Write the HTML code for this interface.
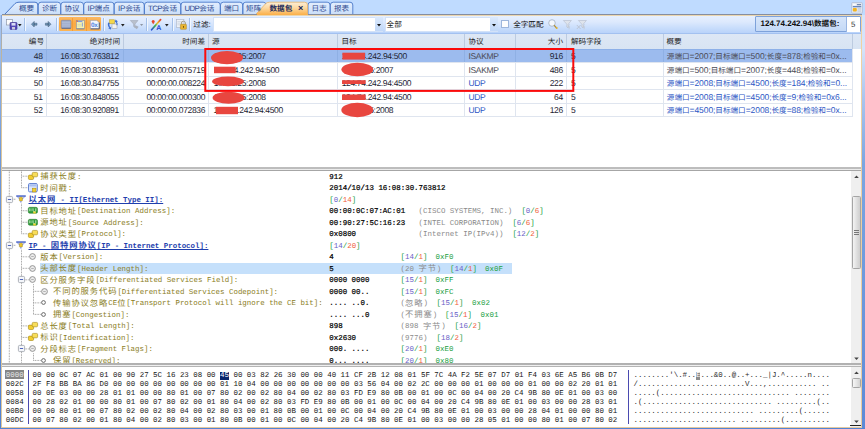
<!DOCTYPE html><html><head><meta charset="utf-8"><title>数据包</title><style>
html,body{margin:0;padding:0;background:#bfdbff;}
#root{text-rendering:geometricPrecision;position:relative;width:865px;height:429px;overflow:hidden;background:#bfdbff;font-family:"Liberation Sans","Noto Sans CJK SC",sans-serif;}
#root div{position:absolute;box-sizing:border-box;}
#root svg{position:absolute;overflow:visible;}
.t{white-space:pre;color:#1a1a1a;}
.s{font-family:"Liberation Sans","Noto Sans CJK SC",sans-serif;font-size:8.1px;}
.tb{font-size:8.5px;letter-spacing:-0.34px;}
.tb .c{letter-spacing:0;}
.tabt .c{letter-spacing:0;}
.s .c{font-size:7.6px;line-height:0;}
.m{font-family:"Liberation Mono","Noto Sans CJK SC",monospace;font-size:7.45px;}
.m .c{line-height:0;font-size:8.3px;letter-spacing:0.9px;font-family:"Noto Sans CJK SC",sans-serif;position:relative;top:0.3px;}
.lab{color:#8a7d1c;}
.val{color:#000;-webkit-text-stroke:0.2px #000;}
.gry{color:#8a8a8a;}
.g{color:#22a03f;}
.p{color:#6a5fc7;}
.r{color:#f0603a;}
.hd{color:#1c1c1c;}
.b{font-weight:bold;}
.sec{color:#1f3fae;font-weight:bold;text-decoration:underline;text-decoration-skip-ink:none;text-underline-offset:1px;text-decoration-thickness:0.8px;}
</style></head><body><div id="root">
<div style="left:0px;top:0px;width:865px;height:14.5px;background:#bfdbff;"></div>
<svg width="865" height="16" viewBox="0 0 865 16" style="left:0;top:0"><defs><linearGradient id="tg" x1="0" y1="0" x2="0" y2="1"><stop offset="0" stop-color="#e3eefd"/><stop offset="1" stop-color="#cadef9"/></linearGradient><linearGradient id="ta" x1="0" y1="0" x2="0" y2="1"><stop offset="0" stop-color="#fdeed6"/><stop offset="0.45" stop-color="#fcd9a2"/><stop offset="1" stop-color="#fbb04a"/></linearGradient></defs><path d="M4.5 14.5 L15 3.5 Q16.5 2.2 19 2.2 L35 2.2 Q37.8 2.2 37.8 5 L37.8 14.5 Z" fill="url(#tg)" stroke="#4a78c8" stroke-width="1"/><path d="M38.3 14.5 L38.3 5 Q38.3 2.2 41.1 2.2 L57.8 2.2 Q60.6 2.2 60.6 5 L60.6 14.5 Z" fill="url(#tg)" stroke="#4a78c8" stroke-width="0.9"/><path d="M60.9 14.5 L60.9 5 Q60.9 2.2 63.7 2.2 L80.7 2.2 Q83.5 2.2 83.5 5 L83.5 14.5 Z" fill="url(#tg)" stroke="#4a78c8" stroke-width="0.9"/><path d="M83.8 14.5 L83.8 5 Q83.8 2.2 86.6 2.2 L111.2 2.2 Q114 2.2 114 5 L114 14.5 Z" fill="url(#tg)" stroke="#4a78c8" stroke-width="0.9"/><path d="M114.3 14.5 L114.3 5 Q114.3 2.2 117.1 2.2 L141.4 2.2 Q144.2 2.2 144.2 5 L144.2 14.5 Z" fill="url(#tg)" stroke="#4a78c8" stroke-width="0.9"/><path d="M144.5 14.5 L144.5 5 Q144.5 2.2 147.3 2.2 L177.9 2.2 Q180.7 2.2 180.7 5 L180.7 14.5 Z" fill="url(#tg)" stroke="#4a78c8" stroke-width="0.9"/><path d="M181 14.5 L181 5 Q181 2.2 183.8 2.2 L217.4 2.2 Q220.2 2.2 220.2 5 L220.2 14.5 Z" fill="url(#tg)" stroke="#4a78c8" stroke-width="0.9"/><path d="M220.5 14.5 L220.5 5 Q220.5 2.2 223.3 2.2 L239.9 2.2 Q242.7 2.2 242.7 5 L242.7 14.5 Z" fill="url(#tg)" stroke="#4a78c8" stroke-width="0.9"/><path d="M243 14.5 L243 5 Q243 2.2 245.8 2.2 L263.2 2.2 Q266 2.2 266 5 L266 14.5 Z" fill="url(#tg)" stroke="#4a78c8" stroke-width="0.9"/><path d="M308 14.5 L308 5 Q308 2.2 310.8 2.2 L327.2 2.2 Q330 2.2 330 5 L330 14.5 Z" fill="url(#tg)" stroke="#4a78c8" stroke-width="0.9"/><path d="M330.4 14.5 L330.4 5 Q330.4 2.2 333.2 2.2 L350 2.2 Q352.8 2.2 352.8 5 L352.8 14.5 Z" fill="url(#tg)" stroke="#4a78c8" stroke-width="0.9"/><path d="M255.5 14.8 L265.5 3.8 Q267 2.2 269.5 2.2 L304.5 2.2 Q307.5 2.2 307.5 5 L307.5 14.8 Z" fill="url(#ta)" stroke="#e8b266" stroke-width="0.8"/></svg>
<div class="t s tabt" style="left:19px;top:2.5px;height:12px;line-height:12px;color:#2f4a8f;font-size:7.8px;letter-spacing:-0.6px;"><span class="c">概要</span></div>
<div class="t s tabt" style="left:42px;top:2.5px;height:12px;line-height:12px;color:#2f4a8f;font-size:7.8px;letter-spacing:-0.6px;"><span class="c">诊断</span></div>
<div class="t s tabt" style="left:64.5px;top:2.5px;height:12px;line-height:12px;color:#2f4a8f;font-size:7.8px;letter-spacing:-0.6px;"><span class="c">协议</span></div>
<div class="t s tabt" style="left:87.4px;top:2.5px;height:12px;line-height:12px;color:#2f4a8f;font-size:8px;letter-spacing:-0.2px;">IP<span class="c">端点</span></div>
<div class="t s tabt" style="left:118px;top:2.5px;height:12px;line-height:12px;color:#2f4a8f;font-size:8px;letter-spacing:-0.2px;">IP<span class="c">会话</span></div>
<div class="t s tabt" style="left:148px;top:2.5px;height:12px;line-height:12px;color:#2f4a8f;font-size:7.8px;letter-spacing:-0.6px;">TCP<span class="c">会话</span></div>
<div class="t s tabt" style="left:184.5px;top:2.5px;height:12px;line-height:12px;color:#2f4a8f;font-size:7.8px;letter-spacing:-0.6px;">UDP<span class="c">会话</span></div>
<div class="t s tabt" style="left:224px;top:2.5px;height:12px;line-height:12px;color:#2f4a8f;font-size:7.8px;letter-spacing:-0.6px;"><span class="c">端口</span></div>
<div class="t s tabt" style="left:246px;top:2.5px;height:12px;line-height:12px;color:#2f4a8f;font-size:7.8px;letter-spacing:-0.6px;"><span class="c">矩阵</span></div>
<div class="t s tabt" style="left:311.5px;top:2.5px;height:12px;line-height:12px;color:#2f4a8f;font-size:7.8px;letter-spacing:-0.6px;"><span class="c">日志</span></div>
<div class="t s tabt" style="left:334px;top:2.5px;height:12px;line-height:12px;color:#2f4a8f;font-size:7.8px;letter-spacing:-0.6px;"><span class="c">报表</span></div>
<div class="t s b tabt" style="left:269.5px;top:2.6px;height:12px;line-height:12px;color:#1c2c5c;font-size:7.9px;"><span class="c">数据包</span></div>
<div class="t s b" style="left:298px;top:2.4px;height:12px;line-height:12px;color:#1c2c5c;font-size:9px;">×</div>
<svg width="12" height="12" viewBox="0 0 12 12" style="left:850.5px;top:1.6px"><rect x="0.5" y="0.5" width="11" height="10.8" rx="1.2" fill="#dfe5ef" stroke="#aebcd6" stroke-width="0.7"/><rect x="2" y="1.8" width="2.8" height="1.6" fill="#fbfcfe"/><rect x="6" y="2" width="4" height="1.2" fill="#7389b2"/><rect x="1.8" y="4.2" width="8.4" height="1" fill="#4a6fae"/><rect x="1.8" y="6" width="4" height="3.6" rx="1" fill="#f3b41f"/><path d="M6.8 6.4H10M6.8 7.8H10M6.8 9.2H10" stroke="#b8c1d0" stroke-width="0.6"/></svg>
<div style="left:1.5px;top:13.9px;width:860.5px;height:1px;background:#868e9f;"></div>
<div style="left:256.5px;top:13.9px;width:51px;height:1px;background:#fbb24e;"></div>
<div style="left:1.5px;top:14.9px;width:860.5px;height:0.9px;background:#ecd6ae;"></div>
<div style="left:1.5px;top:15.8px;width:860.5px;height:17.5px;background:linear-gradient(#e6f0ff 0%,#dde9fd 35%,#cde0fc 62%,#b9d3fa 100%);"></div>
<div style="left:1.5px;top:32.8px;width:860.5px;height:0.9px;background:#a3c1f0;"></div>
<div style="left:24.1px;top:18px;width:1px;height:13px;background:#a4c0e8;"></div>
<div style="left:25.1px;top:18px;width:1px;height:13px;background:#f2f7fe;"></div>
<div style="left:56.1px;top:18px;width:1px;height:13px;background:#a4c0e8;"></div>
<div style="left:57.1px;top:18px;width:1px;height:13px;background:#f2f7fe;"></div>
<div style="left:102.5px;top:18px;width:1px;height:13px;background:#a4c0e8;"></div>
<div style="left:103.5px;top:18px;width:1px;height:13px;background:#f2f7fe;"></div>
<div style="left:146.1px;top:18px;width:1px;height:13px;background:#a4c0e8;"></div>
<div style="left:147.1px;top:18px;width:1px;height:13px;background:#f2f7fe;"></div>
<div style="left:172.2px;top:18px;width:1px;height:13px;background:#a4c0e8;"></div>
<div style="left:173.2px;top:18px;width:1px;height:13px;background:#f2f7fe;"></div>
<div style="left:189px;top:18px;width:1px;height:13px;background:#a4c0e8;"></div>
<div style="left:190px;top:18px;width:1px;height:13px;background:#f2f7fe;"></div>
<div style="left:58.8px;top:17.2px;width:42.2px;height:13.9px;background:linear-gradient(#fcb862,#fbab45 45%,#fbad49 70%,#fcb555);border-radius:1.2px;"></div>
<div style="left:72px;top:17.6px;width:0.8px;height:13.1px;background:#f59c36;"></div>
<div style="left:86.4px;top:17.6px;width:0.8px;height:13.1px;background:#f59c36;"></div>
<svg width="12" height="11" viewBox="0 0 12 11" style="left:6px;top:19px"><rect x="0.5" y="0.5" width="6" height="5.5" fill="#fdfdfd" stroke="#8e98a8" stroke-width="0.7"/><rect x="4" y="3.5" width="7" height="7" rx="0.8" fill="#5548b8" stroke="#3a2f8c" stroke-width="0.6"/><rect x="5.5" y="4" width="4" height="2.6" fill="#d9dcf5"/><rect x="6" y="8" width="3" height="2.5" fill="#c9c9dd"/></svg>
<svg width="4" height="3" viewBox="0 0 4 3" style="left:17.6px;top:23.5px"><path d="M0 0 L3.6 0 L1.8 2.4 Z" fill="#222"/></svg>
<svg width="6.4" height="6.4" viewBox="0 0 6.4 6.4" style="left:31px;top:21.3px"><path d="M3.2 0.4 L3.2 6 L0.4 3.2 Z M3.2 2.2 L6 2.2 L6 4.2 L3.2 4.2 Z" fill="#6b93b6" stroke="#3f5872" stroke-width="0.5"/></svg>
<svg width="6.4" height="6.4" viewBox="0 0 6.4 6.4" style="left:44.6px;top:21.3px"><path d="M3.2 0.4 L3.2 6 L6 3.2 Z M3.2 2.2 L0.4 2.2 L0.4 4.2 L3.2 4.2 Z" fill="#6b93b6" stroke="#3f5872" stroke-width="0.5"/></svg>
<svg width="10.4" height="9" viewBox="0 0 10.4 9" style="left:60.6px;top:19.6px"><rect x="0.3" y="0.3" width="9.6" height="8" rx="0.9" fill="#97a6c8" stroke="#6f7fa6" stroke-width="0.5"/><path d="M0.8 2.2H9.4M0.8 4.1H9.4M0.8 6H9.4" stroke="#c6d0e4" stroke-width="0.7"/><path d="M0.6 8.4H9.8" stroke="#4f5d82" stroke-width="0.7"/></svg>
<svg width="9" height="9.4" viewBox="0 0 9 9.4" style="left:75.6px;top:19.6px"><rect x="0.4" y="0.4" width="7.9" height="8.4" fill="#f6f2b2" stroke="#8792ae" stroke-width="0.6"/><rect x="1.8" y="1" width="4.6" height="1.1" fill="#7f9be0"/><circle cx="1.2" cy="1.3" r="0.7" fill="#d9453a"/><path d="M1.4 4.4H5.6M1.4 6H5.6" stroke="#c9cfa6" stroke-width="0.6"/><path d="M6.4 2.6V6.6" stroke="#6f8fdc" stroke-width="0.8"/><path d="M0.6 8.9H8.2" stroke="#5b6788" stroke-width="0.6"/></svg>
<svg width="10" height="9.4" viewBox="0 0 10 9.4" style="left:89.5px;top:19.6px"><path d="M0.4 0.4 H6.8 L9.2 2.6 V8.7 H0.4 Z" fill="#f3f7fe" stroke="#8292b4" stroke-width="0.5"/><path d="M9.3 2.6V8.9H0.6" fill="none" stroke="#3b4a6c" stroke-width="0.8"/><text x="1" y="7.4" font-size="6.4" font-family="Liberation Sans, sans-serif" fill="#4d84e2" font-weight="bold" letter-spacing="-0.4">0x</text></svg>
<svg width="11.5" height="11" viewBox="0 0 11.5 11" style="left:106.5px;top:19px"><rect x="2.5" y="0.8" width="5" height="4" fill="#f5d84a" stroke="#b89a1f" stroke-width="0.5"/><rect x="5" y="5" width="5" height="4.3" fill="#f2f2f2" stroke="#9b9b9b" stroke-width="0.5"/><path d="M1.2 3.5 Q0 6 2.4 9.2 L1 9.4 L4 10.6 L4.2 7.6 L3.2 8.4 Q1.8 6 2.6 4 Z" fill="#3f6fd0"/><path d="M8.5 0.4 L11 2.6 L9.9 2.8 Q11.2 5 10.2 6.6 L9.4 6 Q9.9 4.4 8.8 3.1 L7.8 3.6 Z" fill="#3f6fd0"/></svg>
<svg width="4" height="3" viewBox="0 0 4 3" style="left:121.3px;top:23.5px"><path d="M0 0 L3.6 0 L1.8 2.4 Z" fill="#222"/></svg>
<svg width="10" height="9.5" viewBox="0 0 10 9.5" style="left:130px;top:20px"><path d="M0.3 0.5 H8 L5 4 V7.5 L3.6 6.5 V4 Z" fill="#b9c0cc" stroke="#9aa3b2" stroke-width="0.5"/><path d="M5.5 5.2 L8.6 6.8 L6.8 9.2 L4.6 7.6 Z" fill="#aab1be"/></svg>
<svg width="3.5" height="3" viewBox="0 0 3.5 3" style="left:140.3px;top:23.8px"><path d="M0 0 L3.2 0 L1.6 2.1 Z" fill="#8d95a3"/></svg>
<svg width="12" height="12" viewBox="0 0 12 12" style="left:150px;top:18.5px"><defs><linearGradient id="rb" x1="1" y1="0" x2="0" y2="1"><stop offset="0" stop-color="#e8432a"/><stop offset="0.35" stop-color="#f2c12f"/><stop offset="0.6" stop-color="#37b04a"/><stop offset="1" stop-color="#2a50d8"/></linearGradient></defs><path d="M10.6 0.6 L1.6 10.8" stroke="url(#rb)" stroke-width="1.7" stroke-linecap="round"/><circle cx="3.2" cy="2.6" r="1.5" fill="#e8432a"/><path d="M2.2 3.8h2l-1 1.4z" fill="#e8432a"/><text x="6.2" y="11.3" font-size="7" font-weight="bold" font-family="Liberation Sans, sans-serif" fill="#2340d0">A</text></svg>
<svg width="4" height="3" viewBox="0 0 4 3" style="left:164.8px;top:23.5px"><path d="M0 0 L3.6 0 L1.8 2.4 Z" fill="#222"/></svg>
<svg width="11" height="11" viewBox="0 0 11 11" style="left:176px;top:19px"><rect x="0.4" y="0.6" width="7.5" height="8" fill="#eef2f8" stroke="#a7b2c4" stroke-width="0.6"/><path d="M1.4 2.6H6.8M1.4 4.2H6.8M1.4 5.8H4" stroke="#b6c0d1" stroke-width="0.5"/><path d="M5.4 5.5 V4 Q5.4 2.2 7.4 2.2 Q9.4 2.2 9.4 4 V5.5" fill="none" stroke="#a9a18a" stroke-width="1"/><rect x="4.4" y="5.3" width="6" height="5" rx="0.6" fill="#e9b530" stroke="#a8801b" stroke-width="0.5"/><rect x="7" y="7" width="0.9" height="1.8" fill="#6a4d10"/></svg>
<div class="t s" style="left:193.3px;top:19px;height:12px;line-height:12px;color:#111;"><span class="c">过滤</span>:</div>
<div style="left:212.8px;top:16.8px;width:170.7px;height:14.9px;background:#fff;border:0.5px solid #d3e2f8;"></div>
<div style="left:374.5px;top:17.2px;width:8px;height:14px;background:linear-gradient(#dbe9fc,#c1d8f8);"></div>
<svg width="4.5" height="3" viewBox="0 0 4.5 3" style="left:376.5px;top:23.5px"><path d="M0 0 L4 0 L2 2.6 Z" fill="#111"/></svg>
<div style="left:384.9px;top:16.8px;width:113px;height:14.9px;background:#fff;border:0.5px solid #d3e2f8;"></div>
<div style="left:489.5px;top:17.2px;width:8px;height:14px;background:linear-gradient(#dbe9fc,#c1d8f8);"></div>
<svg width="4.5" height="3" viewBox="0 0 4.5 3" style="left:491.5px;top:23.5px"><path d="M0 0 L4 0 L2 2.6 Z" fill="#111"/></svg>
<div class="t s" style="left:386.6px;top:18.9px;height:12px;line-height:12px;color:#111;"><span class="c">全部</span></div>
<div style="left:501px;top:20px;width:8.3px;height:8.3px;background:#fdfdfe;border:0.8px solid #9eb6dc;"></div>
<div class="t s" style="left:513.2px;top:19px;height:12px;line-height:12px;color:#111;"><span class="c">全字匹配</span></div>
<svg width="10" height="11" viewBox="0 0 10 11" style="left:548px;top:19px"><circle cx="4" cy="4" r="3.3" fill="#f4f8fd" stroke="#a9b6c8" stroke-width="0.9"/><path d="M6.4 6.6 L8.6 9" stroke="#b2923c" stroke-width="1.4" stroke-linecap="round"/><circle cx="8.7" cy="9" r="0.9" fill="#e2b530"/></svg>
<svg width="10" height="10" viewBox="0 0 10 10" style="left:563px;top:19.5px"><path d="M0.4 0.5 H8.4 L5.2 4.2 V8 L3.8 7 V4.2 Z" fill="#dfe4ec" stroke="#b4bccb" stroke-width="0.6"/><path d="M6.4 4 L5.2 7 L6.6 6.6 L6 9.4" fill="none" stroke="#c2c8d4" stroke-width="0.7"/></svg>
<svg width="11" height="10" viewBox="0 0 11 10" style="left:576px;top:19.5px"><path d="M2.4 0.5 H10.4 L7.2 4.2 V8 L5.8 7 V4.2 Z" fill="#dfe4ec" stroke="#b4bccb" stroke-width="0.6"/><path d="M0.8 5 L4.6 9 M4.6 5 L0.8 9" stroke="#b9c1cf" stroke-width="0.9"/><path d="M8.4 4 L7.2 7 L8.6 6.6 L8 9.4" fill="none" stroke="#c2c8d4" stroke-width="0.7"/></svg>
<div style="left:755px;top:16.2px;width:105.6px;height:16.2px;background:linear-gradient(#d6e5fa,#c4d9f6);border:0.8px solid #7ea2da;border-radius:1px;"></div>
<div style="left:845.6px;top:17px;width:14.2px;height:14.6px;background:#fff;border-left:0.6px solid #9ab6e2;"></div>
<div class="t s b" style="left:760.5px;top:18.4px;height:12px;line-height:12px;color:#111;font-size:8px;">124.74.242.94\<span class="c">数据包</span>:</div>
<div class="t s" style="left:851px;top:18.5px;height:12px;line-height:12px;color:#333;font-size:7.8px;">5</div>
<div style="left:1.5px;top:33.6px;width:860.5px;height:15.4px;background:linear-gradient(#dde7f5,#d8e4f3);"></div>
<div style="left:1.5px;top:48.6px;width:860.5px;height:0.6px;background:#c6d5ea;"></div>
<div style="left:1.5px;top:48.8px;width:860.5px;height:118.4px;background:#fff;"></div>
<div style="left:1.5px;top:49.2px;width:851px;height:12.95px;background:#9cbbee;border-top:0.6px solid #8db0e8;"></div>
<div style="left:1.5px;top:62.25px;width:851px;height:0.8px;background:#dfe5ef;"></div>
<div style="left:1.5px;top:75.7px;width:851px;height:0.8px;background:#dfe5ef;"></div>
<div style="left:1.5px;top:89.15px;width:851px;height:0.8px;background:#dfe5ef;"></div>
<div style="left:1.5px;top:102.6px;width:851px;height:0.8px;background:#dfe5ef;"></div>
<div style="left:1.5px;top:116.05px;width:851px;height:0.8px;background:#dfe5ef;"></div>
<div style="left:46.1px;top:33.6px;width:0.8px;height:15px;background:#bccbe0;"></div>
<div style="left:46.1px;top:48.8px;width:0.8px;height:67.25px;background:#dfe5ef;"></div>
<div style="left:122.9px;top:33.6px;width:0.8px;height:15px;background:#bccbe0;"></div>
<div style="left:122.9px;top:48.8px;width:0.8px;height:67.25px;background:#dfe5ef;"></div>
<div style="left:207.6px;top:33.6px;width:0.8px;height:15px;background:#bccbe0;"></div>
<div style="left:207.6px;top:48.8px;width:0.8px;height:67.25px;background:#dfe5ef;"></div>
<div style="left:336.6px;top:33.6px;width:0.8px;height:15px;background:#bccbe0;"></div>
<div style="left:336.6px;top:48.8px;width:0.8px;height:67.25px;background:#dfe5ef;"></div>
<div style="left:464.1px;top:33.6px;width:0.8px;height:15px;background:#bccbe0;"></div>
<div style="left:464.1px;top:48.8px;width:0.8px;height:67.25px;background:#dfe5ef;"></div>
<div style="left:515.3px;top:33.6px;width:0.8px;height:15px;background:#bccbe0;"></div>
<div style="left:515.3px;top:48.8px;width:0.8px;height:67.25px;background:#dfe5ef;"></div>
<div style="left:566.4px;top:33.6px;width:0.8px;height:15px;background:#bccbe0;"></div>
<div style="left:566.4px;top:48.8px;width:0.8px;height:67.25px;background:#dfe5ef;"></div>
<div style="left:662.6px;top:33.6px;width:0.8px;height:15px;background:#bccbe0;"></div>
<div style="left:662.6px;top:48.8px;width:0.8px;height:67.25px;background:#dfe5ef;"></div>
<div style="left:852.1px;top:33.6px;width:0.8px;height:15px;background:#bccbe0;"></div>
<div style="left:852.1px;top:48.8px;width:0.8px;height:67.25px;background:#dfe5ef;"></div>
<div style="left:46.1px;top:49.4px;width:0.8px;height:12.85px;background:#8fb0e4;"></div>
<div style="left:122.9px;top:49.4px;width:0.8px;height:12.85px;background:#8fb0e4;"></div>
<div style="left:207.6px;top:49.4px;width:0.8px;height:12.85px;background:#8fb0e4;"></div>
<div style="left:336.6px;top:49.4px;width:0.8px;height:12.85px;background:#8fb0e4;"></div>
<div style="left:464.1px;top:49.4px;width:0.8px;height:12.85px;background:#8fb0e4;"></div>
<div style="left:515.3px;top:49.4px;width:0.8px;height:12.85px;background:#8fb0e4;"></div>
<div style="left:566.4px;top:49.4px;width:0.8px;height:12.85px;background:#8fb0e4;"></div>
<div style="left:662.6px;top:49.4px;width:0.8px;height:12.85px;background:#8fb0e4;"></div>
<div class="t s hd" style="left:-16px;width:60px;text-align:right;top:35.8px;height:12px;line-height:12px;"><span class="c">编号</span></div>
<div class="t s hd" style="left:60px;width:60px;text-align:right;top:35.8px;height:12px;line-height:12px;"><span class="c">绝对时间</span></div>
<div class="t s hd" style="left:145px;width:60px;text-align:right;top:35.8px;height:12px;line-height:12px;"><span class="c">时间差</span></div>
<div class="t s hd" style="left:212px;top:35.8px;height:12px;line-height:12px;"><span class="c">源</span></div>
<div class="t s hd" style="left:341.5px;top:35.8px;height:12px;line-height:12px;"><span class="c">目标</span></div>
<div class="t s hd" style="left:468.5px;top:35.8px;height:12px;line-height:12px;"><span class="c">协议</span></div>
<div class="t s hd" style="left:503px;width:60px;text-align:right;top:35.8px;height:12px;line-height:12px;"><span class="c">大小</span></div>
<div class="t s hd" style="left:571px;top:35.8px;height:12px;line-height:12px;"><span class="c">解码字段</span></div>
<div class="t s hd" style="left:666.5px;top:35.8px;height:12px;line-height:12px;"><span class="c">概要</span></div>
<div class="t s tb" style="left:0px;width:42.6px;text-align:right;top:50.425px;height:12px;line-height:12px;color:#1d2433;">48</div>
<div class="t s tb" style="left:50px;width:68.9px;text-align:right;top:50.425px;height:12px;line-height:12px;color:#1d2433;">16:08:30.763812</div>
<div class="t s tb" style="left:130px;width:75.1px;text-align:right;top:50.425px;height:12px;line-height:12px;color:#1d2433;"></div>
<div class="t s tb" style="left:200px;width:65.7px;text-align:right;top:50.425px;height:12px;line-height:12px;color:#1d2433;">10.1.1.25:2007</div>
<div class="t s tb" style="left:330px;width:76.9px;text-align:right;top:50.425px;height:12px;line-height:12px;color:#1d2433;">124.74.242.94:500</div>
<div class="t s tb" style="left:468.5px;top:50.425px;height:12px;line-height:12px;color:#4a4a55;">ISAKMP</div>
<div class="t s tb" style="left:520px;width:42.8px;text-align:right;top:50.425px;height:12px;line-height:12px;color:#1d2433;">916</div>
<div class="t s tb" style="left:571px;top:50.425px;height:12px;line-height:12px;color:#1d2433;">5</div>
<div class="t s tb" style="left:666.8px;top:50.425px;height:12px;line-height:12px;color:#4a4a55;letter-spacing:-0.08px;"><span class="c c2">源端口</span>=2007;<span class="c c2">目标端口</span>=500;<span class="c c2">长度</span>=878;<span class="c c2">检验和</span>=0x...</div>
<div class="t s tb" style="left:0px;width:42.6px;text-align:right;top:63.875px;height:12px;line-height:12px;color:#1d2433;">49</div>
<div class="t s tb" style="left:50px;width:68.9px;text-align:right;top:63.875px;height:12px;line-height:12px;color:#1d2433;">16:08:30.839531</div>
<div class="t s tb" style="left:130px;width:75.1px;text-align:right;top:63.875px;height:12px;line-height:12px;color:#1d2433;">00:00:00.075719</div>
<div class="t s tb" style="left:200px;width:79.2px;text-align:right;top:63.875px;height:12px;line-height:12px;color:#1d2433;">124.74.242.94:500</div>
<div class="t s tb" style="left:330px;width:63.2px;text-align:right;top:63.875px;height:12px;line-height:12px;color:#1d2433;">10.1.1.5:2007</div>
<div class="t s tb" style="left:468.5px;top:63.875px;height:12px;line-height:12px;color:#4a4a55;">ISAKMP</div>
<div class="t s tb" style="left:520px;width:42.8px;text-align:right;top:63.875px;height:12px;line-height:12px;color:#1d2433;">486</div>
<div class="t s tb" style="left:571px;top:63.875px;height:12px;line-height:12px;color:#1d2433;">5</div>
<div class="t s tb" style="left:666.8px;top:63.875px;height:12px;line-height:12px;color:#4a4a55;letter-spacing:-0.08px;"><span class="c c2">源端口</span>=500;<span class="c c2">目标端口</span>=2007;<span class="c c2">长度</span>=448;<span class="c c2">检验和</span>=0x...</div>
<div class="t s tb" style="left:0px;width:42.6px;text-align:right;top:77.325px;height:12px;line-height:12px;color:#1d2433;">50</div>
<div class="t s tb" style="left:50px;width:68.9px;text-align:right;top:77.325px;height:12px;line-height:12px;color:#1d2433;">16:08:30.847755</div>
<div class="t s tb" style="left:130px;width:75.1px;text-align:right;top:77.325px;height:12px;line-height:12px;color:#1d2433;">00:00:00.008224</div>
<div class="t s tb" style="left:200px;width:65.7px;text-align:right;top:77.325px;height:12px;line-height:12px;color:#1d2433;">10.1.1.25:2008</div>
<div class="t s tb" style="left:330px;width:81.2px;text-align:right;top:77.325px;height:12px;line-height:12px;color:#1d2433;">124.74.242.94:4500</div>
<div class="t s tb" style="left:468.5px;top:77.325px;height:12px;line-height:12px;color:#2b55c4;">UDP</div>
<div class="t s tb" style="left:520px;width:42.8px;text-align:right;top:77.325px;height:12px;line-height:12px;color:#1d2433;">222</div>
<div class="t s tb" style="left:571px;top:77.325px;height:12px;line-height:12px;color:#1d2433;">5</div>
<div class="t s tb" style="left:666.8px;top:77.325px;height:12px;line-height:12px;color:#2b55c4;letter-spacing:-0.08px;"><span class="c c2">源端口</span>=2008;<span class="c c2">目标端口</span>=4500;<span class="c c2">长度</span>=184;<span class="c c2">检验和</span>=0...</div>
<div class="t s tb" style="left:0px;width:42.6px;text-align:right;top:90.775px;height:12px;line-height:12px;color:#1d2433;">51</div>
<div class="t s tb" style="left:50px;width:68.9px;text-align:right;top:90.775px;height:12px;line-height:12px;color:#1d2433;">16:08:30.848055</div>
<div class="t s tb" style="left:130px;width:75.1px;text-align:right;top:90.775px;height:12px;line-height:12px;color:#1d2433;">00:00:00.000300</div>
<div class="t s tb" style="left:200px;width:65.7px;text-align:right;top:90.775px;height:12px;line-height:12px;color:#1d2433;">10.1.1.25:2008</div>
<div class="t s tb" style="left:330px;width:81.2px;text-align:right;top:90.775px;height:12px;line-height:12px;color:#1d2433;">124.74.242.94:4500</div>
<div class="t s tb" style="left:468.5px;top:90.775px;height:12px;line-height:12px;color:#2b55c4;">UDP</div>
<div class="t s tb" style="left:520px;width:42.8px;text-align:right;top:90.775px;height:12px;line-height:12px;color:#1d2433;">64</div>
<div class="t s tb" style="left:571px;top:90.775px;height:12px;line-height:12px;color:#1d2433;">5</div>
<div class="t s tb" style="left:666.8px;top:90.775px;height:12px;line-height:12px;color:#2b55c4;letter-spacing:-0.08px;"><span class="c c2">源端口</span>=2008;<span class="c c2">目标端口</span>=4500;<span class="c c2">长度</span>=9;<span class="c c2">检验和</span>=0x6...</div>
<div class="t s tb" style="left:0px;width:42.6px;text-align:right;top:104.225px;height:12px;line-height:12px;color:#1d2433;">52</div>
<div class="t s tb" style="left:50px;width:68.9px;text-align:right;top:104.225px;height:12px;line-height:12px;color:#1d2433;">16:08:30.920891</div>
<div class="t s tb" style="left:130px;width:75.1px;text-align:right;top:104.225px;height:12px;line-height:12px;color:#1d2433;">00:00:00.072836</div>
<div class="t s tb" style="left:200px;width:82.9px;text-align:right;top:104.225px;height:12px;line-height:12px;color:#1d2433;">124.74.242.94:4500</div>
<div class="t s tb" style="left:330px;width:63.2px;text-align:right;top:104.225px;height:12px;line-height:12px;color:#1d2433;">10.1.1.5:2008</div>
<div class="t s tb" style="left:468.5px;top:104.225px;height:12px;line-height:12px;color:#2b55c4;">UDP</div>
<div class="t s tb" style="left:520px;width:42.8px;text-align:right;top:104.225px;height:12px;line-height:12px;color:#1d2433;">126</div>
<div class="t s tb" style="left:571px;top:104.225px;height:12px;line-height:12px;color:#1d2433;">5</div>
<div class="t s tb" style="left:666.8px;top:104.225px;height:12px;line-height:12px;color:#2b55c4;letter-spacing:-0.08px;"><span class="c c2">源端口</span>=4500;<span class="c c2">目标端口</span>=2008;<span class="c c2">长度</span>=88;<span class="c c2">检验和</span>=0x...</div>
<svg width="865" height="130" viewBox="0 0 865 130" style="left:0;top:0"><ellipse cx="227" cy="57.7" rx="16" ry="6.6" fill="#e8463f"/><rect x="214" y="66.7" width="21.7" height="6.5" fill="#e8463f"/><ellipse cx="228" cy="81.4" rx="15.9" ry="4.8" fill="#e8463f"/><ellipse cx="228.6" cy="97.8" rx="16" ry="6" fill="#e8463f"/><rect x="216" y="106.8" width="22" height="7.4" fill="#e8463f"/><rect x="342.4" y="52.7" width="22.7" height="6.9" fill="#e8463f"/><ellipse cx="357.3" cy="69.5" rx="15.9" ry="6.8" fill="#e8463f"/><rect x="342" y="80.2" width="23.7" height="3.8" fill="#e8463f"/><rect x="342" y="94.5" width="23.7" height="5.5" fill="#e8463f"/><ellipse cx="357.3" cy="110" rx="16" ry="7.2" fill="#e8463f"/><rect x="205.3" y="49" width="368" height="41.9" fill="none" stroke="#fb0a0a" stroke-width="2"/></svg>
<div style="left:1.5px;top:166.8px;width:860.5px;height:4px;background:linear-gradient(#bebebe 0,#bcbcbc 52%,#ececec 52%,#ececec 76%,#a6a6a6 76%);"></div>
<div style="left:1.5px;top:170.6px;width:860.5px;height:192.8px;background:#fff;"></div>
<div style="left:40.3px;top:262.92px;width:472px;height:10.8px;background:#c5e0fb;"></div>
<svg width="865" height="429" viewBox="0 0 865 429" style="left:0;top:0"><path d="M9.3 170.6V363.2M21.5 170.6V187.715M21.5 176.2H28M21.5 187.715H28M21.5 203.73V233.775M21.5 210.745H28.2M21.5 222.26H28.2M21.5 233.775H28.2M12.5 199.23H16M12.5 245.29H16M21.5 249.79V363.2M21.5 256.805H29M21.5 268.32H29M21.5 325.895H29M21.5 337.41H29M24.7 279.835H29M24.7 348.925H29M33.5 284.335V314.38M33.5 291.35H41.2M33.5 302.865H41.2M33.5 314.38H41.4M33.5 353.425V360.44M33.5 360.44H41.4" fill="none" stroke="#8c8c8c" stroke-width="0.9" stroke-dasharray="0.8 0.8"/></svg>
<svg width="7" height="7" viewBox="0 0 7 7" style="left:5.8px;top:195.73px"><rect x="0.4" y="0.4" width="6.2" height="6.2" rx="1.2" fill="#f4f6fa" stroke="#9b9fa8" stroke-width="0.8"/><path d="M1.9 3.5H5.1" stroke="#3f57b8" stroke-width="0.9"/></svg>
<svg width="7" height="7" viewBox="0 0 7 7" style="left:5.8px;top:241.79px"><rect x="0.4" y="0.4" width="6.2" height="6.2" rx="1.2" fill="#f4f6fa" stroke="#9b9fa8" stroke-width="0.8"/><path d="M1.9 3.5H5.1" stroke="#3f57b8" stroke-width="0.9"/></svg>
<svg width="7" height="7" viewBox="0 0 7 7" style="left:18px;top:276.335px"><rect x="0.4" y="0.4" width="6.2" height="6.2" rx="1.2" fill="#f4f6fa" stroke="#9b9fa8" stroke-width="0.8"/><path d="M1.9 3.5H5.1" stroke="#3f57b8" stroke-width="0.9"/></svg>
<svg width="7" height="7" viewBox="0 0 7 7" style="left:18px;top:345.425px"><rect x="0.4" y="0.4" width="6.2" height="6.2" rx="1.2" fill="#f4f6fa" stroke="#9b9fa8" stroke-width="0.8"/><path d="M1.9 3.5H5.1" stroke="#3f57b8" stroke-width="0.9"/></svg>
<div style="left:1.5px;top:170.6px;width:849.5px;height:192.8px;overflow:hidden;">
<svg width="10" height="8" viewBox="0 0 10 8" style="left:26.7px;top:1.6px"><rect x="0.4" y="3.1" width="5.2" height="4.4" rx="1.1" fill="#f2cd32" stroke="#a48710" stroke-width="0.6"/><rect x="4.2" y="0.4" width="5.4" height="4.4" rx="1.1" fill="#f8dd5a" stroke="#a48710" stroke-width="0.6"/></svg>
<div class="t m lab" style="left:38.7px;top:1.1px;height:12px;line-height:12px;"><span class="c">捕获长度</span>:</div>
<div class="t m val" style="left:327.8px;top:1.1px;height:12px;line-height:12px;">912</div>
<svg width="10" height="9.6" viewBox="0 0 10 9.6" style="left:26.7px;top:12.415px"><rect x="0.5" y="0.5" width="8.8" height="8.4" rx="1.2" fill="#dbe5fb" stroke="#5577cf" stroke-width="0.9"/><rect x="1.3" y="1.3" width="7.2" height="2.2" fill="#a9bff0"/><rect x="4.4" y="5.2" width="3.6" height="3.8" fill="#f3d02f" stroke="#a48710" stroke-width="0.5"/></svg>
<div class="t m lab" style="left:38.7px;top:12.615px;height:12px;line-height:12px;"><span class="c">时间戳</span>:</div>
<div class="t m val" style="left:327.8px;top:12.615px;height:12px;line-height:12px;">2014/10/13 16:08:30.763812</div>
<svg width="10" height="9" viewBox="0 0 10 9" style="left:14.5px;top:24.03px"><path d="M0.2 0.4H9.8V1.7H0.2Z" fill="#2d4cc0"/><path d="M1.2 1.7 L4.4 4.6 M8.8 1.7 L5.6 4.6" stroke="#4a63c8" stroke-width="0.7"/><rect x="3.4" y="2.2" width="3" height="3.8" rx="0.4" fill="#ecc52c" stroke="#8f7412" stroke-width="0.4"/><path d="M4.9 6V7.6" stroke="#4a63c8" stroke-width="0.8"/></svg>
<div class="t m sec" style="left:27px;top:24.13px;height:12px;line-height:12px;"><span class="c">以太网</span> - II[Ethernet Type II]:</div>
<div class="t m " style="left:327.8px;top:24.13px;height:12px;line-height:12px;"><span class="g">[</span><span class="p">0</span><span class="g">/</span><span class="r">14</span><span class="g">]</span></div>
<svg width="10" height="7" viewBox="0 0 10 7" style="left:26.7px;top:36.745px"><rect x="0.3" y="0.3" width="9.2" height="6" rx="1.5" fill="#2f9d39" stroke="#1e7428" stroke-width="0.5"/><path d="M1.6 1.4V4.2M3 1.4V4.2" stroke="#cfeecd" stroke-width="0.7"/><path d="M5 1.3V3.4Q5 4.6 6.4 4.6Q7.8 4.6 7.8 3.4V1.3" fill="none" stroke="#eaf7e6" stroke-width="0.8"/><rect x="5.2" y="4.4" width="2.6" height="2.2" rx="0.5" fill="#f1d632"/></svg>
<div class="t m lab" style="left:38.7px;top:35.645px;height:12px;line-height:12px;"><span class="c">目标地址</span>[Destination Address]:</div>
<div class="t m val" style="left:327.8px;top:35.645px;height:12px;line-height:12px;">00:00:0C:07:AC:01</div>
<div class="t m gry" style="left:417.1px;top:35.645px;height:12px;line-height:12px;">(CISCO SYSTEMS, INC.)</div>
<div class="t m " style="left:519.9px;top:35.645px;height:12px;line-height:12px;"><span class="g">[</span><span class="p">0</span><span class="g">/</span><span class="r">6</span><span class="g">]</span></div>
<svg width="10" height="7" viewBox="0 0 10 7" style="left:26.7px;top:48.26px"><rect x="0.3" y="0.3" width="9.2" height="6" rx="1.5" fill="#2f9d39" stroke="#1e7428" stroke-width="0.5"/><path d="M1.6 1.4V4.2M3 1.4V4.2" stroke="#cfeecd" stroke-width="0.7"/><path d="M5 1.3V3.4Q5 4.6 6.4 4.6Q7.8 4.6 7.8 3.4V1.3" fill="none" stroke="#eaf7e6" stroke-width="0.8"/><rect x="5.2" y="4.4" width="2.6" height="2.2" rx="0.5" fill="#f1d632"/></svg>
<div class="t m lab" style="left:38.7px;top:47.16px;height:12px;line-height:12px;"><span class="c">源地址</span>[Source Address]:</div>
<div class="t m val" style="left:327.8px;top:47.16px;height:12px;line-height:12px;">00:90:27:5C:16:23</div>
<div class="t m gry" style="left:417.1px;top:47.16px;height:12px;line-height:12px;">(INTEL CORPORATION)</div>
<div class="t m " style="left:510.9px;top:47.16px;height:12px;line-height:12px;"><span class="g">[</span><span class="p">6</span><span class="g">/</span><span class="r">6</span><span class="g">]</span></div>
<svg width="10" height="8" viewBox="0 0 10 8" style="left:26.7px;top:59.175px"><rect x="0.4" y="3.1" width="5.2" height="4.4" rx="1.1" fill="#f2cd32" stroke="#a48710" stroke-width="0.6"/><rect x="4.2" y="0.4" width="5.4" height="4.4" rx="1.1" fill="#f8dd5a" stroke="#a48710" stroke-width="0.6"/></svg>
<div class="t m lab" style="left:38.7px;top:58.675px;height:12px;line-height:12px;"><span class="c">协议类型</span>[Protocol]:</div>
<div class="t m val" style="left:327.8px;top:58.675px;height:12px;line-height:12px;">0x0800</div>
<div class="t m gry" style="left:417.1px;top:58.675px;height:12px;line-height:12px;">(Internet IP(IPv4))</div>
<div class="t m " style="left:510.9px;top:58.675px;height:12px;line-height:12px;"><span class="g">[</span><span class="p">12</span><span class="g">/</span><span class="r">2</span><span class="g">]</span></div>
<svg width="10" height="9" viewBox="0 0 10 9" style="left:14.5px;top:70.09px"><path d="M0.2 0.4H9.8V1.7H0.2Z" fill="#2d4cc0"/><path d="M1.2 1.7 L4.4 4.6 M8.8 1.7 L5.6 4.6" stroke="#4a63c8" stroke-width="0.7"/><rect x="3.4" y="2.2" width="3" height="3.8" rx="0.4" fill="#ecc52c" stroke="#8f7412" stroke-width="0.4"/><path d="M4.9 6V7.6" stroke="#4a63c8" stroke-width="0.8"/></svg>
<div class="t m sec" style="left:27px;top:70.19px;height:12px;line-height:12px;">IP - <span class="c">因特网协议</span>[IP - Internet Protocol]:</div>
<div class="t m " style="left:327.8px;top:70.19px;height:12px;line-height:12px;"><span class="g">[</span><span class="p">14</span><span class="g">/</span><span class="r">20</span><span class="g">]</span></div>
<svg width="7" height="7" viewBox="0 0 7 7" style="left:27.4px;top:82.705px"><circle cx="3.5" cy="3.5" r="2.9" fill="#ececec" stroke="#8b8b8b" stroke-width="0.9"/><path d="M2.2 3.5H4.8" stroke="#9c9c9c" stroke-width="0.7"/></svg>
<div class="t m lab" style="left:38.7px;top:81.705px;height:12px;line-height:12px;"><span class="c">版本</span>[Version]:</div>
<div class="t m val" style="left:327.8px;top:81.705px;height:12px;line-height:12px;">4</div>
<div class="t m " style="left:399.1px;top:81.705px;height:12px;line-height:12px;"><span class="g">[</span><span class="p">14</span><span class="g">/</span><span class="r">1</span><span class="g">]</span></div>
<div class="t m g" style="left:434.1px;top:81.705px;height:12px;line-height:12px;">0xF0</div>
<svg width="7" height="7" viewBox="0 0 7 7" style="left:27.4px;top:94.22px"><circle cx="3.5" cy="3.5" r="2.9" fill="#ececec" stroke="#8b8b8b" stroke-width="0.9"/><path d="M2.2 3.5H4.8" stroke="#9c9c9c" stroke-width="0.7"/></svg>
<div class="t m lab" style="left:38.7px;top:93.22px;height:12px;line-height:12px;"><span class="c">头部长度</span>[Header Length]:</div>
<div class="t m val" style="left:327.8px;top:93.22px;height:12px;line-height:12px;">5</div>
<div class="t m gry" style="left:399.1px;top:93.22px;height:12px;line-height:12px;">(20 <span class="c">字节</span>)</div>
<div class="t m " style="left:448.6px;top:93.22px;height:12px;line-height:12px;"><span class="g">[</span><span class="p">14</span><span class="g">/</span><span class="r">1</span><span class="g">]</span></div>
<div class="t m g" style="left:483.6px;top:93.22px;height:12px;line-height:12px;">0x0F</div>
<svg width="7" height="7" viewBox="0 0 7 7" style="left:27.4px;top:105.735px"><circle cx="3.5" cy="3.5" r="2.9" fill="#ececec" stroke="#8b8b8b" stroke-width="0.9"/><path d="M2.2 3.5H4.8" stroke="#9c9c9c" stroke-width="0.7"/></svg>
<div class="t m lab" style="left:38.7px;top:104.735px;height:12px;line-height:12px;"><span class="c">区分服务字段</span>[Differentiated Services Field]:</div>
<div class="t m val" style="left:327.8px;top:104.735px;height:12px;line-height:12px;">0000 0000</div>
<div class="t m " style="left:399.1px;top:104.735px;height:12px;line-height:12px;"><span class="g">[</span><span class="p">15</span><span class="g">/</span><span class="r">1</span><span class="g">]</span></div>
<div class="t m g" style="left:434.1px;top:104.735px;height:12px;line-height:12px;">0xFF</div>
<svg width="7" height="7" viewBox="0 0 7 7" style="left:39.7px;top:117.25px"><circle cx="3.5" cy="3.5" r="2.9" fill="#ececec" stroke="#8b8b8b" stroke-width="0.9"/><path d="M2.2 3.5H4.8" stroke="#9c9c9c" stroke-width="0.7"/></svg>
<div class="t m lab" style="left:51.5px;top:116.25px;height:12px;line-height:12px;"><span class="c">不同的服务代码</span>[Differentiated Services Codepoint]:</div>
<div class="t m val" style="left:327.8px;top:116.25px;height:12px;line-height:12px;">0000 00..</div>
<div class="t m " style="left:399.1px;top:116.25px;height:12px;line-height:12px;"><span class="g">[</span><span class="p">15</span><span class="g">/</span><span class="r">1</span><span class="g">]</span></div>
<div class="t m g" style="left:434.1px;top:116.25px;height:12px;line-height:12px;">0xFC</div>
<svg width="5" height="5" viewBox="0 0 5 5" style="left:39.5px;top:129.765px"><circle cx="2.5" cy="2.5" r="1.9" fill="#fdfdfd" stroke="#4a4a4a" stroke-width="0.8"/></svg>
<div class="t m lab" style="left:51.5px;top:127.765px;height:12px;line-height:12px;"><span class="c">传输协议忽略</span>CE<span class="c">位</span>[Transport Protocol will ignore the CE bit]:</div>
<div class="t m val" style="left:327.8px;top:127.765px;height:12px;line-height:12px;">.... ..0.</div>
<div class="t m gry" style="left:399.1px;top:127.765px;height:12px;line-height:12px;">(<span class="c">忽略</span>)</div>
<div class="t m " style="left:435.1px;top:127.765px;height:12px;line-height:12px;"><span class="g">[</span><span class="p">15</span><span class="g">/</span><span class="r">1</span><span class="g">]</span></div>
<div class="t m g" style="left:470.6px;top:127.765px;height:12px;line-height:12px;">0x02</div>
<svg width="5" height="5" viewBox="0 0 5 5" style="left:39.5px;top:141.28px"><circle cx="2.5" cy="2.5" r="1.9" fill="#fdfdfd" stroke="#4a4a4a" stroke-width="0.8"/></svg>
<div class="t m lab" style="left:51.5px;top:139.28px;height:12px;line-height:12px;"><span class="c">拥塞</span>[Congestion]:</div>
<div class="t m val" style="left:327.8px;top:139.28px;height:12px;line-height:12px;">.... ...0</div>
<div class="t m gry" style="left:399.1px;top:139.28px;height:12px;line-height:12px;">(<span class="c">不拥塞</span>)</div>
<div class="t m " style="left:443.6px;top:139.28px;height:12px;line-height:12px;"><span class="g">[</span><span class="p">15</span><span class="g">/</span><span class="r">1</span><span class="g">]</span></div>
<div class="t m g" style="left:479.1px;top:139.28px;height:12px;line-height:12px;">0x01</div>
<svg width="10" height="8" viewBox="0 0 10 8" style="left:26.7px;top:151.295px"><rect x="0.4" y="3.1" width="5.2" height="4.4" rx="1.1" fill="#f2cd32" stroke="#a48710" stroke-width="0.6"/><rect x="4.2" y="0.4" width="5.4" height="4.4" rx="1.1" fill="#f8dd5a" stroke="#a48710" stroke-width="0.6"/></svg>
<div class="t m lab" style="left:38.7px;top:150.795px;height:12px;line-height:12px;"><span class="c">总长度</span>[Total Length]:</div>
<div class="t m val" style="left:327.8px;top:150.795px;height:12px;line-height:12px;">898</div>
<div class="t m gry" style="left:399.1px;top:150.795px;height:12px;line-height:12px;">(898 <span class="c">字节</span>)</div>
<div class="t m " style="left:453.1px;top:150.795px;height:12px;line-height:12px;"><span class="g">[</span><span class="p">16</span><span class="g">/</span><span class="r">2</span><span class="g">]</span></div>
<svg width="10" height="8" viewBox="0 0 10 8" style="left:26.7px;top:162.81px"><rect x="0.4" y="3.1" width="5.2" height="4.4" rx="1.1" fill="#f2cd32" stroke="#a48710" stroke-width="0.6"/><rect x="4.2" y="0.4" width="5.4" height="4.4" rx="1.1" fill="#f8dd5a" stroke="#a48710" stroke-width="0.6"/></svg>
<div class="t m lab" style="left:38.7px;top:162.31px;height:12px;line-height:12px;"><span class="c">标识</span>[Identification]:</div>
<div class="t m val" style="left:327.8px;top:162.31px;height:12px;line-height:12px;">0x2630</div>
<div class="t m gry" style="left:399.1px;top:162.31px;height:12px;line-height:12px;">(9776)</div>
<div class="t m " style="left:435.1px;top:162.31px;height:12px;line-height:12px;"><span class="g">[</span><span class="p">18</span><span class="g">/</span><span class="r">2</span><span class="g">]</span></div>
<svg width="7" height="7" viewBox="0 0 7 7" style="left:27.4px;top:174.825px"><circle cx="3.5" cy="3.5" r="2.9" fill="#ececec" stroke="#8b8b8b" stroke-width="0.9"/><path d="M2.2 3.5H4.8" stroke="#9c9c9c" stroke-width="0.7"/></svg>
<div class="t m lab" style="left:38.7px;top:173.825px;height:12px;line-height:12px;"><span class="c">分段标志</span>[Fragment Flags]:</div>
<div class="t m val" style="left:327.8px;top:173.825px;height:12px;line-height:12px;">000. ....</div>
<div class="t m " style="left:399.1px;top:173.825px;height:12px;line-height:12px;"><span class="g">[</span><span class="p">20</span><span class="g">/</span><span class="r">1</span><span class="g">]</span></div>
<div class="t m g" style="left:434.1px;top:173.825px;height:12px;line-height:12px;">0xE0</div>
<svg width="5" height="5" viewBox="0 0 5 5" style="left:39.5px;top:187.34px"><circle cx="2.5" cy="2.5" r="1.9" fill="#fdfdfd" stroke="#4a4a4a" stroke-width="0.8"/></svg>
<div class="t m lab" style="left:51.5px;top:185.34px;height:12px;line-height:12px;"><span class="c">保留</span>[Reserved]:</div>
<div class="t m val" style="left:327.8px;top:185.34px;height:12px;line-height:12px;">0... ....</div>
<div class="t m " style="left:399.1px;top:185.34px;height:12px;line-height:12px;"><span class="g">[</span><span class="p">20</span><span class="g">/</span><span class="r">1</span><span class="g">]</span></div>
<div class="t m g" style="left:434.1px;top:185.34px;height:12px;line-height:12px;">0x80</div>
</div>
<div style="left:851.2px;top:170.6px;width:10px;height:192.8px;background:#efefef;"></div>
<svg width="5" height="3.5" viewBox="0 0 5 3.5" style="left:853.8px;top:174.5px"><path d="M0.2 3 L2.5 0.4 L4.8 3 Z" fill="#444"/></svg>
<svg width="5" height="3.5" viewBox="0 0 5 3.5" style="left:853.8px;top:356.8px"><path d="M0.2 0.4 L4.8 0.4 L2.5 3 Z" fill="#444"/></svg>
<div style="left:852px;top:195.7px;width:9px;height:73px;background:linear-gradient(to right,#f4f4f4,#dcdcdc 60%,#cfcfcf);border:0.7px solid #a5a5a5;border-radius:1.5px;"></div>
<div style="left:854.3px;top:230px;width:4.4px;height:0.7px;background:#777;"></div>
<div style="left:854.3px;top:231.8px;width:4.4px;height:0.7px;background:#777;"></div>
<div style="left:854.3px;top:233.6px;width:4.4px;height:0.7px;background:#777;"></div>
<div style="left:1.5px;top:363.2px;width:860.5px;height:3.5px;background:linear-gradient(#b0b0b0 0,#b2b2b2 46%,#efefef 46%,#efefef 72%,#b4b4b4 72%);"></div>
<div style="left:1.5px;top:366.7px;width:860.5px;height:60.1px;background:#fff;"></div>
<div style="left:5.3px;top:370.2px;width:18.7px;height:8.7px;background:#858585;"></div>
<div style="left:28.1px;top:369.6px;width:0.9px;height:54px;background:#4a4ab0;"></div>
<div style="left:628.2px;top:369.6px;width:0.9px;height:54px;background:#4a4ab0;"></div>
<div class="t m" style="left:5.8px;top:372px;height:9px;line-height:9px;font-size:7.45px;color:#161616;color:#e6e6e6;">0000</div>
<div class="t m" style="left:32.6px;top:372px;height:9px;line-height:9px;font-size:7.45px;color:#161616;">00 00 0C 07 AC 01 00 90 27 5C 16 23 08 00 <span style="background:#0a246a;color:#fff;">45</span> 00 03 82 26 30 00 00 40 11 CF 2B 12 08 01 5F 7C 4A F2 5E 07 D7 01 F4 03 6E A5 B6 0B D7</div>
<div class="t m" style="left:633.5px;top:372px;height:9px;line-height:9px;font-size:7.45px;color:#2a2a2a;">........&#x27;\.#..<span style="background:#8c8c8c;color:#fff;">E</span>...&amp;0..@..+..._|J.^.....n....</div>
<div class="t m" style="left:5.8px;top:380.93px;height:9px;line-height:9px;font-size:7.45px;color:#161616;">002C</div>
<div class="t m" style="left:32.6px;top:380.93px;height:9px;line-height:9px;font-size:7.45px;color:#161616;">2F F8 BB BA 86 D0 00 00 00 00 00 00 00 00 01 10 04 00 00 00 00 00 00 00 03 56 04 00 02 2C 00 00 00 01 00 00 00 01 00 00 02 20 01 01</div>
<div class="t m" style="left:633.5px;top:380.93px;height:9px;line-height:9px;font-size:7.45px;color:#2a2a2a;">/........................V...,........... ..</div>
<div class="t m" style="left:5.8px;top:389.86px;height:9px;line-height:9px;font-size:7.45px;color:#161616;">0058</div>
<div class="t m" style="left:32.6px;top:389.86px;height:9px;line-height:9px;font-size:7.45px;color:#161616;">00 0E 03 00 00 28 01 01 00 00 80 01 00 07 80 02 00 02 80 04 00 02 80 03 FD E9 80 0B 00 01 00 0C 00 04 00 20 C4 9B 80 0E 01 00 03 00</div>
<div class="t m" style="left:633.5px;top:389.86px;height:9px;line-height:9px;font-size:7.45px;color:#2a2a2a;">.....(............................. ........</div>
<div class="t m" style="left:5.8px;top:398.79px;height:9px;line-height:9px;font-size:7.45px;color:#161616;">0084</div>
<div class="t m" style="left:32.6px;top:398.79px;height:9px;line-height:9px;font-size:7.45px;color:#161616;">00 28 02 01 00 00 80 01 00 07 80 02 00 01 80 04 00 02 80 03 FD E9 80 0B 00 01 00 0C 00 04 00 20 C4 9B 80 0E 01 00 03 00 00 28 03 01</div>
<div class="t m" style="left:633.5px;top:398.79px;height:9px;line-height:9px;font-size:7.45px;color:#2a2a2a;">.(............................. .........(..</div>
<div class="t m" style="left:5.8px;top:407.72px;height:9px;line-height:9px;font-size:7.45px;color:#161616;">00B0</div>
<div class="t m" style="left:32.6px;top:407.72px;height:9px;line-height:9px;font-size:7.45px;color:#161616;">00 00 80 01 00 07 80 02 00 02 80 04 00 02 80 03 00 01 80 0B 00 01 00 0C 00 04 00 20 C4 9B 80 0E 01 00 03 00 00 28 04 01 00 00 80 01</div>
<div class="t m" style="left:633.5px;top:407.72px;height:9px;line-height:9px;font-size:7.45px;color:#2a2a2a;">........................... .........(......</div>
<div class="t m" style="left:5.8px;top:416.65px;height:9px;line-height:9px;font-size:7.45px;color:#161616;">00DC</div>
<div class="t m" style="left:32.6px;top:416.65px;height:9px;line-height:9px;font-size:7.45px;color:#161616;">00 07 80 02 00 01 80 04 00 02 80 03 00 01 80 0B 00 01 00 0C 00 04 00 20 C4 9B 80 0E 01 00 03 00 00 28 05 01 00 00 80 01 00 07 80 02</div>
<div class="t m" style="left:633.5px;top:416.65px;height:9px;line-height:9px;font-size:7.45px;color:#2a2a2a;">....................... .........(..........</div>
<div style="left:851.2px;top:366.7px;width:9.9px;height:59.9px;background:#efefef;"></div>
<svg width="5" height="3.5" viewBox="0 0 5 3.5" style="left:853.8px;top:371.3px"><path d="M0.2 3 L2.5 0.4 L4.8 3 Z" fill="#444"/></svg>
<svg width="5" height="3.5" viewBox="0 0 5 3.5" style="left:853.8px;top:419.5px"><path d="M0.2 0.4 L4.8 0.4 L2.5 3 Z" fill="#444"/></svg>
<div style="left:852px;top:378.3px;width:9px;height:10.2px;background:linear-gradient(to right,#f6f6f6,#e2e2e2 60%,#d2d2d2);border:0.7px solid #a5a5a5;border-radius:1.5px;"></div>
<div style="left:850px;top:424.6px;width:11.5px;height:1.2px;background:#222;"></div>
<div style="left:0px;top:14.5px;width:1.3px;height:415px;background:linear-gradient(#aac8f1 0,#8fb2e6 15%,#6f98d9 35%,#5b89d6 70%,#5282d3 100%);"></div>
<div style="left:1.3px;top:14.5px;width:0.8px;height:412.8px;background:linear-gradient(#7f9fd6 0,#b9b29f 8%,#dcc79d 30%,#dcc79d 100%);"></div>
<div style="left:861.4px;top:14.5px;width:1px;height:412.8px;background:linear-gradient(#f0d2a2,#e6c9a0);"></div>
<div style="left:862.4px;top:14.5px;width:2.6px;height:415px;background:linear-gradient(#d4e3fb 0,#d6e4fa 8%,#a9c5ef 20%,#7ba6e1 36%,#6b97dc 70%,#5c8ad7 100%);"></div>
<div style="left:1.3px;top:426.6px;width:861.1px;height:0.9px;background:#e3caa0;"></div>
<div style="left:0px;top:427.5px;width:865px;height:1.5px;background:#5383d4;"></div>
</div></body></html>
